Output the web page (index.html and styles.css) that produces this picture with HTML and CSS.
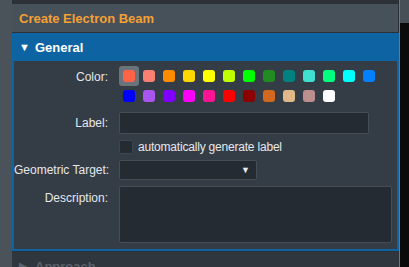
FILE: index.html
```html
<!DOCTYPE html>
<html lang="en">
<head>
  <meta charset="UTF-8" />
  <title>Create Electron Beam</title>
  <link rel="stylesheet" href="styles.css">
</head>
<body>
  <div class="frame">
    <div class="gutter"></div>

    <div class="dialog">
      <div class="topline"></div>
      <div class="title">Create Electron Beam</div>

      <div class="section open">
        <div class="section-head"><span class="arrow">&#9660;</span>General</div>
        <div class="section-body">
          <div class="field-label top">Color:</div>
          <div class="swatches">
            <span class="cell selected"><i style="background:#ff6347"></i></span>
            <span class="cell"><i style="background:#fa8072"></i></span>
            <span class="cell"><i style="background:#ff8c00"></i></span>
            <span class="cell"><i style="background:#ffd700"></i></span>
            <span class="cell"><i style="background:#ffff00"></i></span>
            <span class="cell"><i style="background:#bfff00"></i></span>
            <span class="cell"><i style="background:#00ff00"></i></span>
            <span class="cell"><i style="background:#228b22"></i></span>
            <span class="cell"><i style="background:#008080"></i></span>
            <span class="cell"><i style="background:#40e0d0"></i></span>
            <span class="cell"><i style="background:#00ff7f"></i></span>
            <span class="cell"><i style="background:#00ffff"></i></span>
            <span class="cell"><i style="background:#0080ff"></i></span>
            <span class="cell"><i style="background:#0000ff"></i></span>
            <span class="cell"><i style="background:#aa55ee"></i></span>
            <span class="cell"><i style="background:#8000ff"></i></span>
            <span class="cell"><i style="background:#ff00ff"></i></span>
            <span class="cell"><i style="background:#ff1493"></i></span>
            <span class="cell"><i style="background:#ff0000"></i></span>
            <span class="cell"><i style="background:#8b0000"></i></span>
            <span class="cell"><i style="background:#d2691e"></i></span>
            <span class="cell"><i style="background:#deb887"></i></span>
            <span class="cell"><i style="background:#bc8f8f"></i></span>
            <span class="cell"><i style="background:#ffffff"></i></span>
          </div>

          <div class="field-label">Label:</div>
          <div class="text-input"></div>

          <div></div>
          <div class="check-row"><span class="checkbox"></span>automatically generate label</div>

          <div class="field-label">Geometric Target:</div>
          <div class="select"><span class="caret">&#9660;</span></div>

          <div class="field-label top desc">Description:</div>
          <div class="textarea"></div>
        </div>
      </div>

      <div class="section closed">
        <div class="section-head"><span class="arrow">&#9654;</span>Approach</div>
      </div>
    </div>

    <div class="scrollbar">
      <div class="scroll-top"></div>
    </div>
  </div>
</body>
</html>
```

FILE: styles.css
```css
* { box-sizing: border-box; margin: 0; padding: 0; }

body {
  font-family: 'Liberation Sans', Arial, sans-serif;
  font-size: 12px;
  background: #4a525a;
  color: #e4e8ec;
  width: 409px;
  height: 267px;
  overflow: hidden;
}

.frame {
  display: flex;
  height: 267px;
}

.gutter {
  width: 12px;
  background: #4a525a;
}

.dialog {
  width: 387px;
  background: #2b3137;
  display: flex;
  flex-direction: column;
}

.dialog > * { flex-shrink: 0; }

.topline { height: 4px; background: #2b3137; }

.title {
  height: 28px;
  margin-right: 1px;
  background: #47515a;
  color: #f5a033;
  font-size: 13px;
  font-weight: bold;
  padding-left: 7px;
  line-height: 29px;
  margin-bottom: 1px;
}

.section-head {
  height: 28px;
  display: flex;
  align-items: center;
  font-size: 13px;
  font-weight: bold;
  padding-left: 5px;
}

.arrow {
  width: 16px;
  font-size: 11px;
}

.open {
  border: 2px solid #0e64a3;
  border-top: none;
}

.open .section-head {
  background: #0e64a3;
  color: #fff;
  margin: 0 -2px;
  padding-left: 7px;
}

.section-body {
  background: #343c45;
  display: grid;
  grid-template-columns: 94px 1fr;
  column-gap: 11px;
  row-gap: 6px;
  align-items: center;
  padding: 5px 0 6px;
}

.field-label {
  text-align: right;
  white-space: nowrap;
}

.field-label.top { align-self: start; padding-top: 4px; }
.field-label.desc { padding-top: 5px; }

.swatches {
  display: grid;
  grid-template-columns: repeat(13, 20px);
  grid-auto-rows: 20px;
}

.cell {
  display: flex;
  align-items: center;
  justify-content: center;
  border-radius: 3px;
}

.cell i {
  width: 12px;
  height: 12px;
  border-radius: 3px;
}

.cell.selected { background: #6b737b; }

.text-input, .select, .textarea {
  background: #252b32;
  border: 1px solid #454d55;
  border-radius: 2px;
}

.text-input { height: 22px; width: 250px; }

.check-row {
  display: flex;
  align-items: center;
  gap: 5px;
  height: 14px;
  letter-spacing: -0.2px;
}

.checkbox {
  width: 14px;
  height: 14px;
  background: #252b32;
  border: 1px solid #3d454d;
  border-radius: 2px;
}

.select {
  height: 20px;
  width: 138px;
  display: flex;
  align-items: center;
  justify-content: flex-end;
  padding-right: 6px;
}

.caret { font-size: 9px; color: #e8ecef; }

.textarea { height: 57px; width: 273px; }

.closed {
  margin-top: 1px;
  background: #2f363d;
  flex: 1;
}

.closed .section-head {
  color: #59616a;
  padding-left: 7px;
  height: 28px;
}

.scrollbar {
  width: 10px;
  border-left: 1px solid #6f777e;
  background: #0b0b0b;
}

.scroll-top { height: 23px; background: #474f57; }
```
